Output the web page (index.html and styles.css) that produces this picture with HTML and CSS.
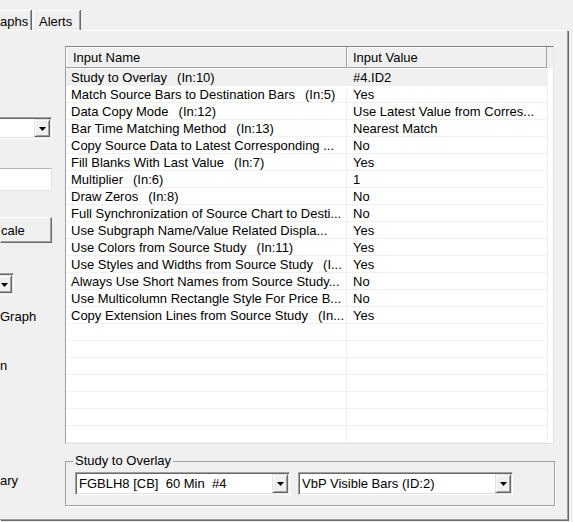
FILE: index.html
```html
<!DOCTYPE html>
<html>
<head>
<meta charset="utf-8">
<link rel="stylesheet" href="styles.css">
</head>
<body>
<div class="tabs">
  <div class="tab tab-first">aphs</div>
  <div class="tab tab-alerts">Alerts</div>
</div>
<div class="panel">
  <div class="side">
    <div class="combo side-combo"><span class="combo-text"></span><span class="combo-btn"><svg width="7" height="4" viewBox="0 0 7 4"><polygon points="0,0 7,0 3.5,4" fill="#000"/></svg></span></div>
    <div class="textbox"></div>
    <div class="button">cale</div>
    <div class="combo side-mini"><span class="combo-text"></span><span class="combo-btn"><svg width="7" height="4" viewBox="0 0 7 4"><polygon points="0,0 7,0 3.5,4" fill="#000"/></svg></span></div>
    <div class="side-label lbl-graph">Graph</div>
    <div class="side-label lbl-n">n</div>
    <div class="side-label lbl-ary">ary</div>
  </div>
  <div class="main">
    <div class="list">
      <div class="list-head">
        <div class="hcell hcell-name">Input Name</div>
        <div class="hcell hcell-value">Input Value</div>
        <div class="hfill"></div>
      </div>
      <div class="list-body">
        <div class="row selected"><div class="cell c1">Study to Overlay<span class="idx">(In:10)</span></div><div class="cell c2">#4.ID2</div></div>
        <div class="row"><div class="cell c1">Match Source Bars to Destination Bars<span class="idx">(In:5)</span></div><div class="cell c2">Yes</div></div>
        <div class="row"><div class="cell c1">Data Copy Mode<span class="idx">(In:12)</span></div><div class="cell c2">Use Latest Value from Corres...</div></div>
        <div class="row"><div class="cell c1">Bar Time Matching Method<span class="idx">(In:13)</span></div><div class="cell c2">Nearest Match</div></div>
        <div class="row"><div class="cell c1">Copy Source Data to Latest Corresponding ...</div><div class="cell c2">No</div></div>
        <div class="row"><div class="cell c1">Fill Blanks With Last Value<span class="idx">(In:7)</span></div><div class="cell c2">Yes</div></div>
        <div class="row"><div class="cell c1">Multiplier<span class="idx">(In:6)</span></div><div class="cell c2">1</div></div>
        <div class="row"><div class="cell c1">Draw Zeros<span class="idx">(In:8)</span></div><div class="cell c2">No</div></div>
        <div class="row"><div class="cell c1">Full Synchronization of Source Chart to Desti...</div><div class="cell c2">No</div></div>
        <div class="row"><div class="cell c1">Use Subgraph Name/Value Related Displa...</div><div class="cell c2">Yes</div></div>
        <div class="row"><div class="cell c1">Use Colors from Source Study<span class="idx">(In:11)</span></div><div class="cell c2">Yes</div></div>
        <div class="row"><div class="cell c1">Use Styles and Widths from Source Study<span class="idx">(I...</span></div><div class="cell c2">Yes</div></div>
        <div class="row"><div class="cell c1">Always Use Short Names from Source Study...</div><div class="cell c2">No</div></div>
        <div class="row"><div class="cell c1">Use Multicolumn Rectangle Style For Price B...</div><div class="cell c2">No</div></div>
        <div class="row"><div class="cell c1">Copy Extension Lines from Source Study<span class="idx">(In...</span></div><div class="cell c2">Yes</div></div>
        <div class="row"><div class="cell c1"></div><div class="cell c2"></div></div>
        <div class="row"><div class="cell c1"></div><div class="cell c2"></div></div>
        <div class="row"><div class="cell c1"></div><div class="cell c2"></div></div>
        <div class="row"><div class="cell c1"></div><div class="cell c2"></div></div>
        <div class="row"><div class="cell c1"></div><div class="cell c2"></div></div>
        <div class="row"><div class="cell c1"></div><div class="cell c2"></div></div>
        <div class="row"><div class="cell c1"></div><div class="cell c2"></div></div>
      </div>
    </div>
    <fieldset class="group">
      <legend class="group-title">Study to Overlay</legend>
      <div class="group-row">
        <div class="combo combo-wide"><span class="combo-text">FGBLH8 [CB]  60 Min  #4</span><span class="combo-btn"><svg width="7" height="4" viewBox="0 0 7 4"><polygon points="0,0 7,0 3.5,4" fill="#000"/></svg></span></div>
        <div class="combo combo-wide"><span class="combo-text">VbP Visible Bars (ID:2)</span><span class="combo-btn"><svg width="7" height="4" viewBox="0 0 7 4"><polygon points="0,0 7,0 3.5,4" fill="#000"/></svg></span></div>
      </div>
    </fieldset>
  </div>
</div>
</body>
</html>
```
FILE: styles.css
```css
html, body {
  margin: 0;
  padding: 0;
}
body {
  width: 573px;
  height: 522px;
  overflow: hidden;
  background: #f0f0f0;
  font-family: "Liberation Sans", Arial, sans-serif;
  font-size: 13px;
  color: #000;
}

/* tabs */
.tabs {
  display: flex;
  align-items: flex-end;
  height: 30px;
}
.tab {
  box-sizing: border-box;
  height: 20px;
  padding-top: 1px;
  line-height: 19px;
  border-top: 1px solid #fff;
  border-left: 1px solid #fff;
  border-right: 1px solid #a0a0a0;
  box-shadow: 1px 0 0 #696969;
}
.tab-first {
  width: 31px;
  border-left: 0;
}
.tab-alerts {
  width: 47px;
  margin-left: 2px;
  padding-left: 5px;
}

/* panel */
.panel {
  box-sizing: border-box;
  width: 568px;
  height: 490px;
  border-top: 1px solid #fff;
  border-right: 1px solid #a0a0a0;
  border-bottom: 1px solid #a0a0a0;
  box-shadow: 1px 1px 0 #696969;
  display: grid;
  grid-template-columns: 65px 489px;
  align-items: start;
}

/* left clipped column */
.side {
  overflow: hidden;
  height: 488px;
  display: flex;
  flex-direction: column;
}
.combo {
  box-sizing: border-box;
  display: flex;
  height: 23px;
  padding: 1px;
  background: #fff;
  border: 1px solid;
  border-color: #a0a0a0 #fff #fff #a0a0a0;
  box-shadow: inset 1px 1px 0 #696969, inset -1px -1px 0 #e3e3e3;
}
.combo-text {
  flex: 1;
  padding-left: 2px;
  padding-top: 1px;
  line-height: 18px;
  white-space: pre;
  overflow: hidden;
}
.combo-btn {
  box-sizing: border-box;
  width: 16px;
  display: flex;
  align-items: center;
  justify-content: center;
  background: #f0f0f0;
  border: 1px solid;
  border-color: #e3e3e3 #696969 #696969 #e3e3e3;
  box-shadow: inset 1px 1px 0 #fff, inset -1px -1px 0 #a0a0a0;
}
.combo-btn svg {
  display: block;
  margin-top: 1px;
}
.side-combo {
  width: 92px;
  height: 22px;
  margin-left: -40px;
  margin-top: 86px;
}
.textbox {
  box-sizing: border-box;
  width: 92px;
  height: 23px;
  margin-left: -40px;
  margin-top: 29px;
  background: #fff;
  border: 1px solid;
  border-color: #b4b4b4 #e3e3e3 #e3e3e3 #b4b4b4;
}
.button {
  box-sizing: border-box;
  width: 52px;
  height: 26px;
  margin-top: 26px;
  padding-top: 1px;
  line-height: 23px;
  background: #f0f0f0;
  border: 1px solid;
  border-color: #fff #696969 #696969 #f0f0f0;
  box-shadow: inset -1px -1px 0 #a0a0a0;
}
.side-mini {
  width: 94px;
  height: 22px;
  margin-left: -80px;
  margin-top: 30px;
}
.side-label {
  line-height: 16px;
  white-space: nowrap;
}
.lbl-graph { margin-top: 14px; }
.lbl-n { margin-top: 33px; }
.lbl-ary { margin-top: 99px; }

/* main column */
.main {
  display: flex;
  flex-direction: column;
}
.list {
  box-sizing: border-box;
  width: 489px;
  height: 398px;
  margin-top: 15px;
  background: #fff;
  border: 1px solid;
  border-color: #828282 #e3e3e3 #e3e3e3 #a0a0a0;
  overflow: hidden;
}
.list-head {
  display: flex;
  height: 21px;
  background: #f0f0f0;
}
.hcell {
  box-sizing: border-box;
  height: 21px;
  padding-top: 1px;
  line-height: 19px;
  border-right: 1px solid #a0a0a0;
  border-bottom: 1px solid #a0a0a0;
  box-shadow: inset 1px 1px 0 #fff;
}
.hcell-name {
  width: 281px;
  padding-left: 7px;
}
.hcell-value {
  width: 200px;
  padding-left: 6px;
}
.hfill {
  flex: 1;
}
.list-body {
  padding-top: 1px;
}
.row {
  box-sizing: border-box;
  display: grid;
  grid-template-columns: 281px 201px;
  width: 482px;
  height: 17px;
  border-bottom: 1px solid #f0f0f0;
}
.row.selected {
  background: #f0f0f0;
}
.cell {
  box-sizing: border-box;
  padding-top: 1px;
  line-height: 15px;
  white-space: nowrap;
  overflow: hidden;
  border-right: 1px solid #f0f0f0;
}
.c1 { padding-left: 5px; }
.c2 { padding-left: 6px; }
.idx { margin-left: 10px; }

/* group box */
.group {
  box-sizing: border-box;
  width: 490px;
  margin: 9px 0 0 0;
  padding: 3px 9px 10px 9px;
  border: 1px solid #a0a0a0;
  box-shadow: 1px 1px 0 #fff;
  min-width: 0;
}
.group-title {
  padding: 0 2px;
  margin-left: -2px;
  line-height: 16px;
}
.group-row {
  display: flex;
  gap: 8px;
}
.combo-wide {
  width: 215px;
}
```
